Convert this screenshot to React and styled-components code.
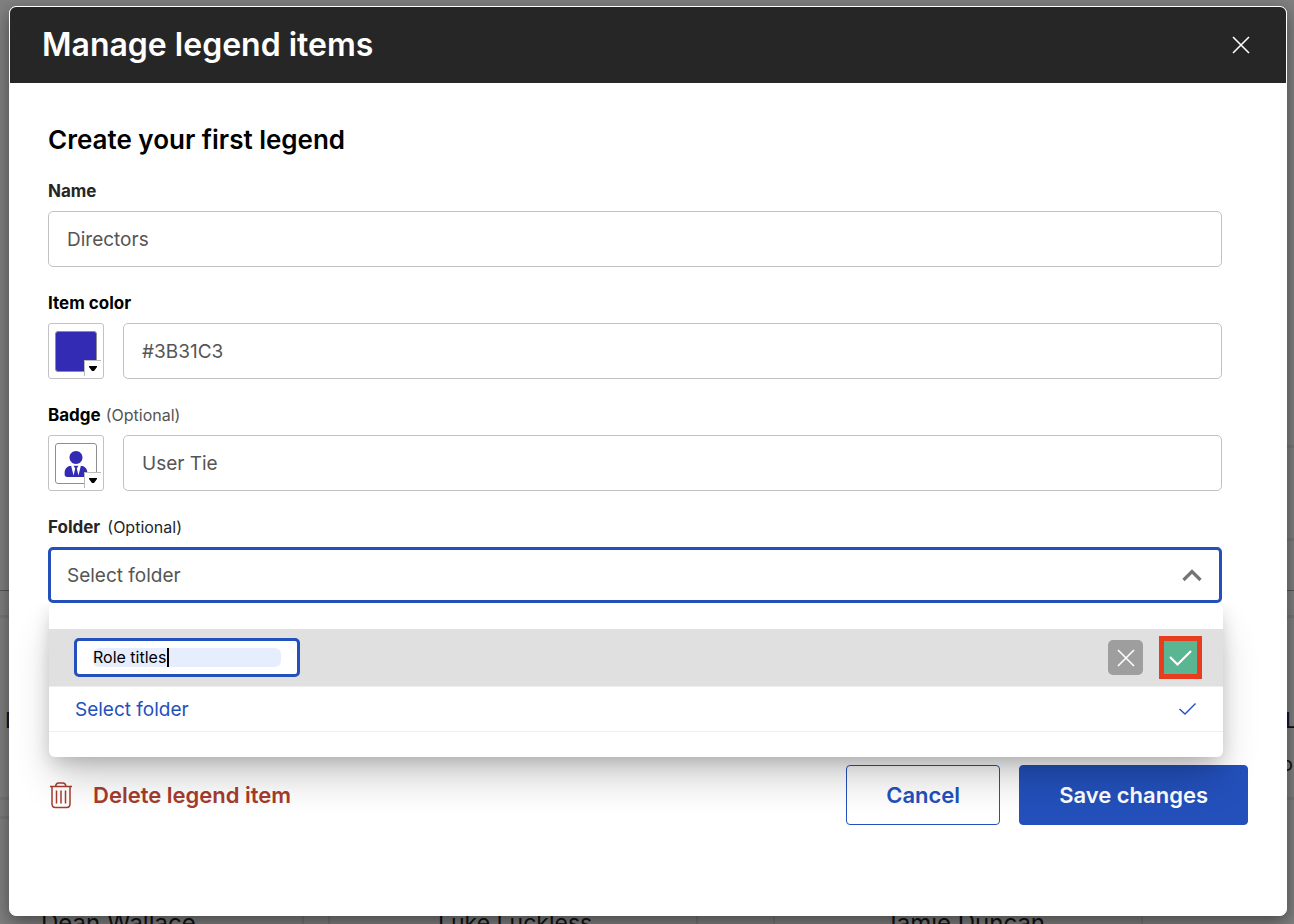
import React, { useState } from 'react';
import styled, { createGlobalStyle } from 'styled-components';
import { FaUserTie } from 'react-icons/fa';

const GlobalStyle = createGlobalStyle`
  * {
    box-sizing: border-box;
  }

  body {
    margin: 0;
    background: #808080;
    font-family: Inter, 'Liberation Sans', sans-serif;
  }

  button, input, select {
    font-family: inherit;
    margin: 0;
  }
`;

const Page = styled.div`
  position: relative;
  min-height: 100vh;
  padding: 6px 7px 8px 9px;
  overflow: hidden;
`;

// Org chart canvas behind the dialog
const Chart = styled.div`
  position: absolute;
  inset: 0;
  overflow: hidden;
`;

const Rule = styled.div`
  position: absolute;
  left: ${(props) => (props.$side === 'right' ? '50%' : 0)};
  right: ${(props) => (props.$side === 'left' ? '50%' : 0)};
  top: ${(props) => props.$top}px;
  height: ${(props) => (props.$dark ? 1 : 3)}px;
  background: ${(props) => (props.$dark ? '#555' : '#787878')};
`;

const Edge = styled.div`
  position: absolute;
  left: ${(props) => props.$left}px;
  top: 840px;
  bottom: 0;
  width: 2px;
  background: #757575;
`;

const Person = styled.div`
  position: absolute;
  left: ${(props) => props.$left}px;
  top: ${(props) => props.$top}px;
  font-size: ${(props) => props.$size || 23}px;
  line-height: 28px;
  color: #111;
  white-space: nowrap;
`;

const Dialog = styled.div`
  position: relative;
  display: flex;
  flex-direction: column;
  min-height: calc(100vh - 14px);
  border: 1px solid #fff;
  border-radius: 7px;
  background: #fff;
  box-shadow: 0 6px 18px rgba(0, 0, 0, 0.45);
`;

const Header = styled.header`
  display: flex;
  align-items: center;
  justify-content: space-between;
  height: 76px;
  padding: 0 32px;
  border-radius: 6px 6px 0 0;
  background: #262626;
`;

const Title = styled.h1`
  margin: 0;
  font-size: 32px;
  line-height: 40px;
  font-weight: 600;
  color: #fff;
`;

const CloseButton = styled.button`
  display: flex;
  padding: 4px;
  border: 0;
  background: none;
  color: #fff;
  cursor: pointer;
`;

const Body = styled.main`
  padding: 40px 38px;
`;

const Heading = styled.h2`
  margin: 0 0 22px;
  font-size: 26px;
  line-height: 34px;
  font-weight: 600;
  color: #000;
`;

const Form = styled.form`
  display: flex;
  flex-direction: column;
  gap: 24px;
  margin-right: 26px;
`;

const Field = styled.div`
  position: relative;
`;

const Label = styled.label`
  display: flex;
  align-items: baseline;
  gap: ${(props) => (props.$soft ? 7 : 5)}px;
  height: 24px;
  margin-bottom: 8px;
  font-size: 17px;
  line-height: 24px;
  font-weight: 700;
  color: ${(props) => (props.$soft ? '#262626' : '#000')};
`;

const Optional = styled.span`
  font-size: 16px;
  font-weight: 400;
  color: ${(props) => (props.$dark ? '#262626' : '#555')};
`;

const Row = styled.div`
  display: flex;
  gap: 19px;
`;

const TextInput = styled.input`
  flex: 1;
  width: 100%;
  min-width: 0;
  height: 56px;
  padding: 0 18px;
  border: 1px solid #c2c2c2;
  border-radius: 5px;
  outline: none;
  background: #fff;
  font-size: 19px;
  color: #555;
`;

const Picker = styled.button`
  position: relative;
  flex: none;
  width: 56px;
  height: 56px;
  padding: 7px 6px 6px;
  border: 1px solid #c2c2c2;
  border-radius: 3px;
  background: #fff;
  cursor: pointer;
`;

const Swatch = styled.span`
  display: flex;
  align-items: center;
  justify-content: center;
  height: 41px;
  border: 1px solid #8f8f8f;
  border-radius: 3px;
  background: ${(props) => props.$fill || '#fff'};
  color: #342bb5;
`;

const PickerArrow = styled.span`
  position: absolute;
  right: 2px;
  bottom: 2px;
  display: flex;
  align-items: center;
  justify-content: center;
  width: 17px;
  height: 16px;
  border: solid #bbb;
  border-width: 1px 0 0 1px;
  background: #fff;
`;

const SelectBox = styled.div`
  position: relative;
  display: flex;
  align-items: center;
`;

const FolderSelect = styled.select`
  appearance: none;
  width: 100%;
  height: 56px;
  padding: 0 50px 0 16px;
  border: 3px solid #2350bb;
  border-radius: 5px;
  outline: none;
  background: #fff;
  font-size: 19px;
  color: #555;
`;

const Chevron = styled.svg`
  position: absolute;
  right: 20px;
  pointer-events: none;
`;

const Menu = styled.div`
  position: absolute;
  z-index: 2;
  top: 100%;
  left: 1px;
  right: -1px;
  padding: 26px 0 25px;
  border-radius: 6px;
  background: #fff;
  box-shadow: 0 24px 40px -4px rgba(0, 0, 0, 0.2), 0 6px 18px -2px rgba(0, 0, 0, 0.18);
  clip-path: inset(0 -60px -90px -60px);
`;

const NewFolderRow = styled.div`
  display: flex;
  align-items: center;
  gap: 20px;
  height: 57px;
  padding: 0 25px;
  background: #e0e0e0;
`;

const NameBox = styled.div`
  position: relative;
  width: 226px;
  margin-right: auto;
  padding: 7px 16px;
  border: 3px solid #2350bb;
  border-radius: 5px;
  background: #fff;
`;

const NameInput = styled.input`
  display: block;
  width: 100%;
  height: 19px;
  padding: 0;
  border: 0;
  border-radius: 6px;
  outline: none;
  background: #e6edfd;
  font-size: 16px;
  line-height: 19px;
  color: #000;
  caret-color: transparent;
`;

const Caret = styled.span`
  position: absolute;
  left: 90px;
  top: 7px;
  width: 2px;
  height: 19px;
  background: #000;
`;

const SquareButton = styled.button`
  display: flex;
  align-items: center;
  justify-content: center;
  width: 35px;
  height: 35px;
  padding: 0;
  border: 0;
  border-radius: 5px;
  background: ${(props) => (props.$confirm ? '#59b592' : '#9e9e9e')};
  color: #fff;
  cursor: pointer;
  ${(props) => props.$confirm && 'outline: 5px solid #e83c1e; outline-offset: -1px; border-radius: 0;'}
`;

const FolderOption = styled.button`
  display: flex;
  align-items: center;
  justify-content: space-between;
  width: 100%;
  height: 46px;
  padding: 0 26px;
  border: solid #eee;
  border-width: 1px 0;
  background: #fff;
  font-size: 19px;
  color: #2350bb;
  cursor: pointer;
`;

const Footer = styled.footer`
  display: flex;
  align-items: center;
  gap: 19px;
  margin-top: 162px;
`;

const DeleteButton = styled.button`
  display: flex;
  align-items: center;
  gap: 19px;
  margin-right: auto;
  padding: 0;
  border: 0;
  background: none;
  font-size: 22px;
  font-weight: 600;
  color: #a63c2e;
  cursor: pointer;
`;

const ActionButton = styled.button`
  height: 60px;
  padding: 0 39px;
  border: 1px solid #2350bb;
  border-radius: 4px;
  background: ${(props) => (props.$primary ? '#2350bb' : '#fff')};
  font-size: 22px;
  font-weight: 600;
  color: ${(props) => (props.$primary ? '#fff' : '#2350bb')};
  cursor: pointer;
`;

const Cross = ({ size }) => (
  <svg width={size} height={size} viewBox="0 0 18 18" fill="none" stroke="currentColor" strokeWidth="1.6">
    <path d="M1 1l16 16M17 1L1 17" />
  </svg>
);

const DownArrow = () => (
  <PickerArrow>
    <svg width="8" height="5" viewBox="0 0 8 5">
      <path d="M0 0h8v1L5 5H3L0 1z" fill="#000" />
    </svg>
  </PickerArrow>
);

const Trash = () => (
  <svg width="26" height="28" viewBox="0 0 26 28" fill="none" stroke="currentColor" strokeWidth="1.5">
    <path d="M2 5.5h22M7.5 5.5C8 2.5 9 2 10.500 2h4.500c1.500 0 2.500.5 3 3.500" />
    <path d="M4 5.500V23c0 2.500 1 3.500 3.500 3.500h11c2.500 0 3.500-1 3.500-3.500V5.500" />
    <path d="M8.500 9.500v13M13 9.500v13M17.500 9.500v13" />
  </svg>
);

const people = [
  { name: 'Dean Wallace', left: 41, top: 909, size: 24 },
  { name: 'Luke Luckless', left: 438, top: 909 },
  { name: 'Jamie Duncan', left: 883, top: 909, size: 24 },
  { name: 'D', left: 5, top: 706, size: 22 },
  { name: 'L', left: 1285, top: 706, size: 22 },
  { name: 'o', left: 1281, top: 750, size: 20 }
];

const App = () => {
  const [name, setName] = useState('Directors');
  const [color, setColor] = useState('#3B31C3');
  const [badge, setBadge] = useState('User Tie');
  const [folder, setFolder] = useState('Role titles');

  return (
    <Page>
      <GlobalStyle />
      <Chart aria-hidden="true">
        <Rule $side="right" $top={445} />
        <Rule $side="right" $top={538} />
        <Rule $dark $top={590} />
        <Rule $top={615} />
        <Rule $top={797} />
        <Rule $side="left" $top={816} />
        {[302, 328, 696, 773, 1141].map((left) => (
          <Edge key={left} $left={left} />
        ))}
        {people.map((p) => (
          <Person key={p.name} $left={p.left} $top={p.top} $size={p.size}>{p.name}</Person>
        ))}
      </Chart>

      <Dialog role="dialog" aria-labelledby="dialog-title">
        <Header>
          <Title id="dialog-title">Manage legend items</Title>
          <CloseButton type="button" aria-label="Close">
            <Cross size={18} />
          </CloseButton>
        </Header>

        <Body>
          <Heading>Create your first legend</Heading>
          <Form onSubmit={(e) => e.preventDefault()}>
            <Field>
              <Label $soft htmlFor="name">Name</Label>
              <TextInput id="name" value={name} onChange={(e) => setName(e.target.value)} />
            </Field>

            <Field>
              <Label htmlFor="color">Item color</Label>
              <Row>
                <Picker type="button" aria-label="Pick color">
                  <Swatch $fill="#342bb5" />
                  <DownArrow />
                </Picker>
                <TextInput id="color" value={color} onChange={(e) => setColor(e.target.value)} />
              </Row>
            </Field>

            <Field>
              <Label htmlFor="badge">Badge <Optional>(Optional)</Optional></Label>
              <Row>
                <Picker type="button" aria-label="Pick badge">
                  <Swatch><FaUserTie size={26} /></Swatch>
                  <DownArrow />
                </Picker>
                <TextInput id="badge" value={badge} onChange={(e) => setBadge(e.target.value)} />
              </Row>
            </Field>

            <Field>
              <Label $soft htmlFor="folder">Folder <Optional $dark>(Optional)</Optional></Label>
              <SelectBox>
                <FolderSelect id="folder">
                  <option>Select folder</option>
                </FolderSelect>
                <Chevron width="20" height="14" viewBox="0 0 20 14" fill="none" stroke="#757575" strokeWidth="3.2">
                  <path d="M1.500 12L10 3.500L18.500 12" />
                </Chevron>
              </SelectBox>
              <Menu>
                <NewFolderRow>
                  <NameBox>
                    <NameInput
                      aria-label="Folder name"
                      value={folder}
                      onChange={(e) => setFolder(e.target.value)}
                    />
                    <Caret />
                  </NameBox>
                  <SquareButton type="button" aria-label="Discard folder">
                    <Cross size={18} />
                  </SquareButton>
                  <SquareButton $confirm type="button" aria-label="Add folder">
                    <svg width="24" height="18" viewBox="0 0 24 18" fill="none" stroke="currentColor" strokeWidth="2.2">
                      <path d="M1 8L8.500 15.500L22 2" />
                    </svg>
                  </SquareButton>
                </NewFolderRow>
                <FolderOption type="button">
                  Select folder
                  <svg width="18" height="13" viewBox="0 0 18 13" fill="none" stroke="currentColor" strokeWidth="1.4">
                    <path d="M.5 6L6 11L16.500 .5" />
                  </svg>
                </FolderOption>
              </Menu>
            </Field>
          </Form>

          <Footer>
            <DeleteButton type="button">
              <Trash />
              Delete legend item
            </DeleteButton>
            <ActionButton type="button">Cancel</ActionButton>
            <ActionButton type="button" $primary>Save changes</ActionButton>
          </Footer>
        </Body>
      </Dialog>
    </Page>
  );
};

export default App;
